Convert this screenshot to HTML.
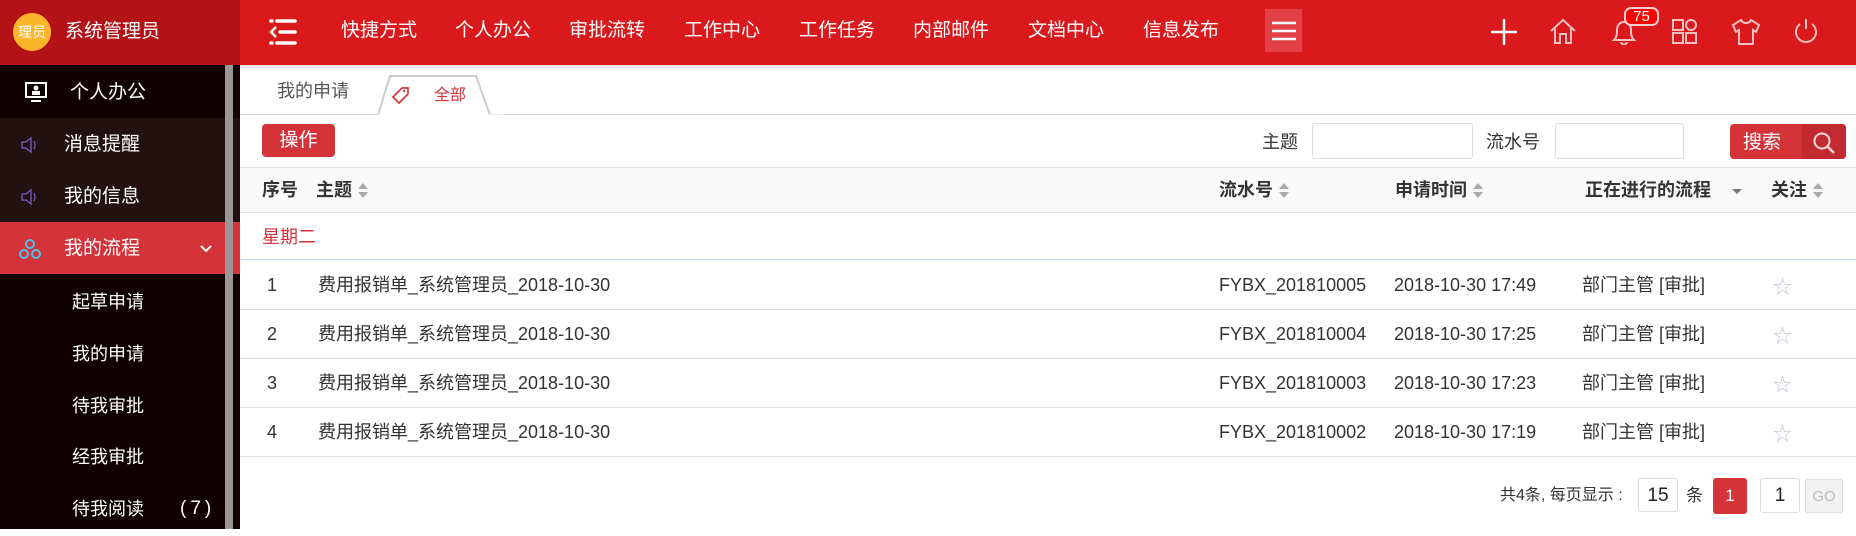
<!DOCTYPE html>
<html><head><meta charset="utf-8"><style>
*{margin:0;padding:0;box-sizing:border-box}
body{width:1856px;height:529px;overflow:hidden;background:#fff;font-family:"Liberation Sans","Noto Sans CJK SC",sans-serif;position:relative;color:#333}
.a{position:absolute}
.hdr{left:240px;top:0;width:1616px;height:65px;background:#d9191c}
.sh{left:0;top:0;width:240px;height:65px;background:#b31217}
.nav{top:0;height:65px;line-height:62px;color:#fff;font-size:19px}
.side{left:0;top:65px;width:240px;height:464px;background:#100000}
.si{left:0;width:240px;height:52px;line-height:54px;color:#fff;font-size:19px}
.sub{left:72px;color:#fff;font-size:18px;line-height:54px;height:52px}
.th{font-weight:bold;font-size:18px;color:#333;top:168px;line-height:45px}
.td{font-size:18px;color:#333;line-height:51px}
.st{color:#c3cad4;font-size:19px;line-height:51px}
.sort{display:inline-block;vertical-align:middle;margin-left:6px;width:10px;height:16px;position:relative}
.sort:before{content:"";position:absolute;left:0;top:0;border:5px solid transparent;border-bottom:6px solid #aaa;border-top:0}
.sort:after{content:"";position:absolute;left:0;top:9px;border:5px solid transparent;border-top:6px solid #aaa;border-bottom:0}
.ic{stroke:#f2c0c0;fill:none;stroke-width:2}
</style></head><body>
<div class="a sh"></div>
<div class="a" style="left:13px;top:13px;width:38px;height:38px;border-radius:50%;background:#fbb62c;color:#fff;font-size:14px;line-height:38px;text-align:center">理员</div>
<div class="a" style="left:65px;top:0;line-height:63px;color:#fff;font-size:19px">系统管理员</div>
<div class="a hdr"></div>
<svg class="a" style="left:268px;top:18px" width="30" height="28"><g stroke="#fff" stroke-width="3.5" stroke-linecap="round"><line x1="9" y1="3" x2="27" y2="3"/><line x1="12" y1="14" x2="27" y2="14"/><line x1="9" y1="25" x2="27" y2="25"/><line x1="3" y1="3" x2="4" y2="3"/><line x1="3" y1="25" x2="4" y2="25"/></g><path d="M8 9 L3 14 L8 19" stroke="#fff" stroke-width="2.5" fill="none"/></svg>
<div class="a nav" style="left:341px">快捷方式</div>
<div class="a nav" style="left:455px">个人办公</div>
<div class="a nav" style="left:569px">审批流转</div>
<div class="a nav" style="left:684px">工作中心</div>
<div class="a nav" style="left:799px">工作任务</div>
<div class="a nav" style="left:913px">内部邮件</div>
<div class="a nav" style="left:1028px">文档中心</div>
<div class="a nav" style="left:1143px">信息发布</div>
<div class="a" style="left:1265px;top:9px;width:37px;height:43px;background:#e14047"></div>
<svg class="a" style="left:1271px;top:20px" width="26" height="22"><g stroke="#fff" stroke-width="2.5"><line x1="1" y1="3" x2="25" y2="3"/><line x1="1" y1="11" x2="25" y2="11"/><line x1="1" y1="19" x2="25" y2="19"/></g></svg>
<svg class="a" style="left:1490px;top:18px" width="28" height="28"><g stroke="#fff" stroke-width="2.5"><line x1="14" y1="1" x2="14" y2="27"/><line x1="1" y1="14" x2="27" y2="14"/></g></svg>
<svg class="a" style="left:1549px;top:17px" width="28" height="28"><path class="ic" d="M2 14 L14 3 L26 14 M6 11 V26 H11 V17 H17 V26 H22 V11"/></svg>
<svg class="a" style="left:1610px;top:18px" width="28" height="28"><path class="ic" d="M4 22 H24 C21 19 21 16 21 12 C21 7 18 4 14 4 C10 4 7 7 7 12 C7 16 7 19 4 22 Z M11 24 C11 27 17 27 17 24"/></svg>
<div class="a" style="left:1624px;top:7px;width:35px;height:19px;border-radius:7px;background:#f00;border:2px solid #f6d0d0;color:#fff;font-size:15px;line-height:15px;text-align:center">75</div>
<svg class="a" style="left:1671px;top:18px" width="28" height="28"><g class="ic"><rect x="2" y="2" width="10" height="10"/><circle cx="20" cy="7" r="5"/><rect x="2" y="15" width="10" height="10"/><rect x="15" y="15" width="10" height="10"/></g></svg>
<svg class="a" style="left:1731px;top:17px" width="30" height="30"><path class="ic" d="M10 3 L2 8 L5 15 L8 13 V27 H22 V13 L25 15 L28 8 L20 3 C18 7 12 7 10 3 Z"/></svg>
<svg class="a" style="left:1792px;top:17px" width="28" height="28"><path class="ic" d="M8 7 A10 10 0 1 0 20 7 M14 2 V12"/></svg>

<div class="a side"></div>
<div class="a si" style="top:65px;background:#100000;height:53px;line-height:56px"><svg class="a" style="left:25px;top:17px" width="22" height="20"><rect x="1" y="1" width="20" height="14" stroke="#fff" stroke-width="2" fill="none"/><circle cx="11" cy="6" r="2.5" fill="#fff"/><rect x="7" y="9" width="8" height="4" fill="#fff"/><line x1="6" y1="19" x2="16" y2="19" stroke="#fff" stroke-width="2"/></svg><span class="a" style="left:70px">个人办公</span></div>
<div class="a si" style="top:118px;background:#231112"><svg class="a" style="left:20px;top:18px" width="18" height="18"><path d="M2 6 H6 L11 2 V16 L6 12 H2 Z M14 5 Q16 9 14 13" stroke="#7b5cc0" stroke-width="1.3" fill="none"/></svg><span class="a" style="left:64px">消息提醒</span></div>
<div class="a si" style="top:170px;background:#231112"><svg class="a" style="left:20px;top:18px" width="18" height="18"><path d="M2 6 H6 L11 2 V16 L6 12 H2 Z M14 5 Q16 9 14 13" stroke="#7b5cc0" stroke-width="1.3" fill="none"/></svg><span class="a" style="left:64px">我的信息</span></div>
<div class="a si" style="top:222px;background:#d5333a"><svg class="a" style="left:19px;top:16px" width="22" height="22"><g stroke="#4fc1e9" stroke-width="2" fill="none"><circle cx="11" cy="6" r="4"/><circle cx="5" cy="16" r="4"/><circle cx="17" cy="16" r="4"/></g></svg><span class="a" style="left:64px">我的流程</span><svg class="a" style="left:200px;top:22px" width="12" height="10"><path d="M1 2 L6 7 L11 2" stroke="#fff" stroke-width="2" fill="none"/></svg></div>
<div class="a sub" style="top:275px">起草申请</div>
<div class="a sub" style="top:327px">我的申请</div>
<div class="a sub" style="top:379px">待我审批</div>
<div class="a sub" style="top:430px">经我审批</div>
<div class="a sub" style="top:482px">待我阅读</div>
<div class="a" style="left:180px;top:482px;line-height:54px;color:#fff;font-size:19px;letter-spacing:4px">(7)</div>
<div class="a" style="left:225px;top:65px;width:8px;height:464px;background:#9c9696"></div>

<div class="a" style="left:240px;top:65px;width:1616px;height:3px;background:#ececec"></div>
<div class="a" style="left:240px;top:114px;width:1616px;height:1px;background:#d4d4d4"></div>
<div class="a" style="left:277px;top:79px;font-size:18px;line-height:24px;color:#555">我的申请</div>
<svg class="a" style="left:378px;top:74px" width="126" height="42"><path d="M0 41 L12 2 H98 L112 41" fill="#fff" stroke="#ccc" stroke-width="2"/><rect x="0" y="40.5" width="126" height="2" fill="#fff"/><path d="M32 11 H38 L38 17 L29 26 L23 20 Z" stroke="#d5333a" stroke-width="1.7" fill="none" transform="translate(-8,3)"/><circle cx="26" cy="17" r="1.2" fill="#d5333a"/></svg>
<div class="a" style="left:434px;top:85px;font-size:16px;line-height:22px;color:#d5333a">全部</div>

<div class="a" style="left:262px;top:124px;width:73px;height:33px;background:#d5333a;border-radius:4px;color:#fff;font-size:19px;line-height:34px;text-align:center">操作</div>
<div class="a" style="left:1262px;top:124px;font-size:18px;line-height:36px">主题</div>
<div class="a" style="left:1312px;top:123px;width:161px;height:36px;border:1px solid #ddd;border-radius:3px"></div>
<div class="a" style="left:1486px;top:124px;font-size:18px;line-height:36px">流水号</div>
<div class="a" style="left:1555px;top:123px;width:129px;height:36px;border:1px solid #ddd;border-radius:3px"></div>
<div class="a" style="left:1730px;top:124px;width:116px;height:35px;background:#d5333a;border-radius:4px"></div>
<div class="a" style="left:1802px;top:124px;width:44px;height:35px;background:#c02a30;border-radius:0 4px 4px 0"></div>
<div class="a" style="left:1743px;top:125px;font-size:19px;line-height:36px;color:#fff">搜索</div>
<svg class="a" style="left:1812px;top:131px" width="24" height="24"><circle cx="10" cy="10" r="7.5" stroke="#f6d6d6" stroke-width="2" fill="none"/><line x1="16" y1="16" x2="22" y2="22" stroke="#f6d6d6" stroke-width="2.5"/></svg>

<div class="a" style="left:240px;top:167px;width:1616px;height:46px;background:#f9f9f9;border-top:1px solid #ddd;border-bottom:1px solid #ddd"></div>
<div class="a th" style="left:262px">序号</div>
<div class="a th" style="left:316px">主题<span class="sort"></span></div>
<div class="a th" style="left:1219px">流水号<span class="sort"></span></div>
<div class="a th" style="left:1395px">申请时间<span class="sort"></span></div>
<div class="a th" style="left:1585px">正在进行的流程</div>
<svg class="a" style="left:1731px;top:188px" width="12" height="8"><path d="M1 1 H11 L6 6 Z" fill="#777"/></svg>
<div class="a th" style="left:1771px">关注<span class="sort"></span></div>
<div class="a" style="left:262px;top:213px;font-size:18px;line-height:48px;color:#d5333a">星期二</div>
<div class="a" style="left:240px;top:259px;width:1616px;height:1px;background:#b7dcf0"></div>

<div class="a td" style="left:267px;top:260px">1</div><div class="a td" style="left:318px;top:260px">费用报销单_系统管理员_2018-10-30</div><div class="a td" style="left:1219px;top:260px">FYBX_201810005</div><div class="a td" style="left:1394px;top:260px">2018-10-30 17:49</div><div class="a td" style="left:1582px;top:260px">部门主管 [审批]</div><div class="a st" style="left:1773px;top:262px">☆</div>
<div class="a" style="left:240px;top:309px;width:1616px;height:1px;background:#ddd"></div>
<div class="a td" style="left:267px;top:309px">2</div><div class="a td" style="left:318px;top:309px">费用报销单_系统管理员_2018-10-30</div><div class="a td" style="left:1219px;top:309px">FYBX_201810004</div><div class="a td" style="left:1394px;top:309px">2018-10-30 17:25</div><div class="a td" style="left:1582px;top:309px">部门主管 [审批]</div><div class="a st" style="left:1773px;top:311px">☆</div>
<div class="a" style="left:240px;top:358px;width:1616px;height:1px;background:#ddd"></div>
<div class="a td" style="left:267px;top:358px">3</div><div class="a td" style="left:318px;top:358px">费用报销单_系统管理员_2018-10-30</div><div class="a td" style="left:1219px;top:358px">FYBX_201810003</div><div class="a td" style="left:1394px;top:358px">2018-10-30 17:23</div><div class="a td" style="left:1582px;top:358px">部门主管 [审批]</div><div class="a st" style="left:1773px;top:360px">☆</div>
<div class="a" style="left:240px;top:407px;width:1616px;height:1px;background:#ddd"></div>
<div class="a td" style="left:267px;top:407px">4</div><div class="a td" style="left:318px;top:407px">费用报销单_系统管理员_2018-10-30</div><div class="a td" style="left:1219px;top:407px">FYBX_201810002</div><div class="a td" style="left:1394px;top:407px">2018-10-30 17:19</div><div class="a td" style="left:1582px;top:407px">部门主管 [审批]</div><div class="a st" style="left:1773px;top:409px">☆</div>
<div class="a" style="left:240px;top:456px;width:1616px;height:1px;background:#ddd"></div>

<div class="a" style="left:1500px;top:479px;font-size:16px;line-height:34px;color:#333">共4条, 每页显示 :</div>
<div class="a" style="left:1638px;top:478px;width:40px;height:34px;border:1px solid #ddd;border-radius:3px;font-size:19px;line-height:33px;text-align:center;color:#222">15</div>
<div class="a" style="left:1686px;top:479px;font-size:17px;line-height:34px">条</div>
<div class="a" style="left:1713px;top:478px;width:34px;height:36px;background:#d5333a;border-radius:3px;color:#fff;font-size:17px;line-height:36px;text-align:center">1</div>
<div class="a" style="left:1760px;top:478px;width:40px;height:35px;border:1px solid #ddd;border-radius:3px;font-size:19px;line-height:34px;text-align:center;color:#222">1</div>
<div class="a" style="left:1805px;top:479px;width:38px;height:34px;border:1px solid #ddd;background:#f2f2f2;border-radius:3px;font-size:15px;line-height:33px;text-align:center;color:#bbb">GO</div>
</body></html>
